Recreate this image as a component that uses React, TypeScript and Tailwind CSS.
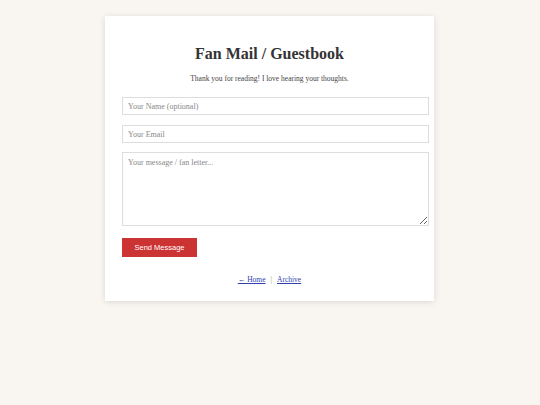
import React from "react";

export default function App() {
  return (
    <div className="min-h-[405px] w-full bg-[#f9f6f1] pt-4" style={{ fontFamily: "'Liberation Serif', 'Times New Roman', serif" }}>
      <div className="ml-[105px] w-[329px] bg-white px-[17px] pb-[16px] pt-[28px] shadow-[0_1px_6px_rgba(0,0,0,0.12)]">
        <h1 className="text-center text-[16px] font-bold leading-[20px] text-[#333]">Fan Mail / Guestbook</h1>
        <p className="mt-[10px] text-center text-[7.5px] leading-[10px] text-[#444]">
          Thank you for reading! I love hearing your thoughts.
        </p>
        <form className="mt-[13px] flex w-[307px] flex-col" onSubmit={(e) => e.preventDefault()}>
          <input
            className="h-[18px] w-full border border-[#ddd] px-[5px] text-[8px] text-[#333] placeholder:text-[#888] outline-none"
            placeholder="Your Name (optional)"
          />
          <input
            className="mt-[10px] h-[18px] w-full border border-[#ddd] px-[5px] text-[8px] text-[#333] placeholder:text-[#888] outline-none"
            placeholder="Your Email"
          />
          <textarea
            className="mt-[9px] h-[74px] w-full border border-[#ddd] px-[5px] pt-[4px] text-[8px] text-[#333] placeholder:text-[#888] outline-none"
            placeholder="Your message / fan letter..."
          />
          <button
            type="submit"
            className="mt-[12px] h-[19px] w-[75px] bg-[#cc3333] text-[7.5px] text-white"
            style={{ fontFamily: "'Liberation Sans', Arial, sans-serif" }}
          >
            Send Message
          </button>
        </form>
        <div className="mt-[18px] flex justify-center gap-[5px] text-[7.5px] leading-[10px]">
          <a href="#" className="text-[#3040b0] underline">← Home</a>
          <span className="text-[#999]">|</span>
          <a href="#" className="text-[#3040b0] underline">Archive</a>
        </div>
      </div>
    </div>
  );
}
